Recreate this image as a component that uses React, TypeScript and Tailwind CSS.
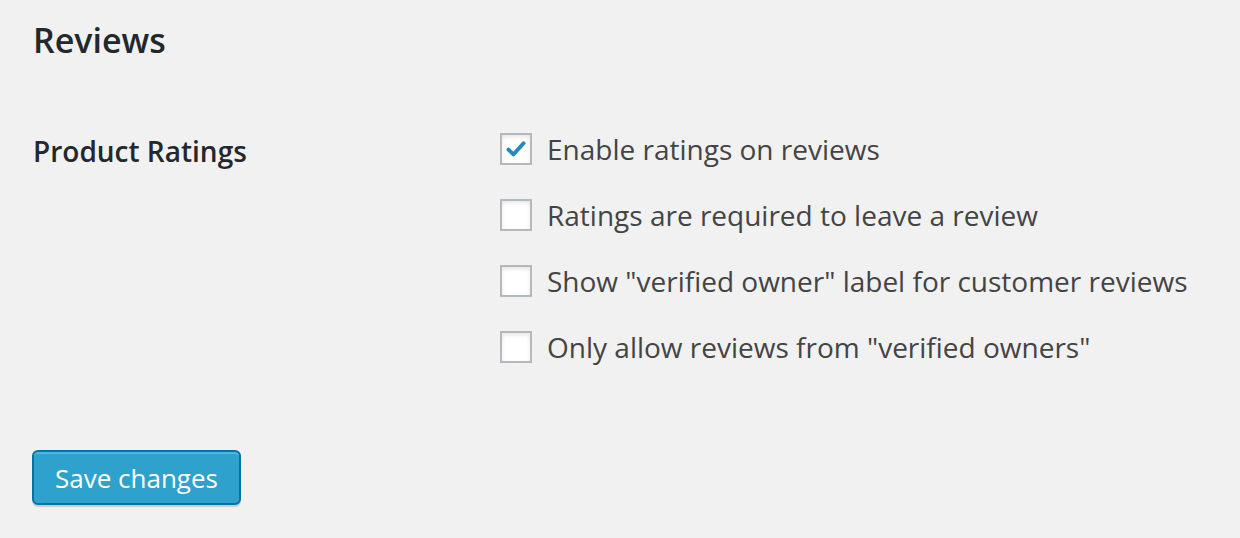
import React, { useState } from 'react';

const options = [
  { id: 'enable_ratings', label: 'Enable ratings on reviews', checked: true },
  { id: 'ratings_required', label: 'Ratings are required to leave a review', checked: false },
  { id: 'verified_label', label: 'Show "verified owner" label for customer reviews', checked: false },
  { id: 'verified_only', label: 'Only allow reviews from "verified owners"', checked: false },
];

const Checkbox = ({ checked, onChange }: { checked: boolean; onChange: () => void }) => (
  <button
    type="button"
    onClick={onChange}
    className="w-[32px] h-[32px] shrink-0 bg-white border-2 border-[#b4b9be] shadow-[inset_0_2px_4px_rgba(0,0,0,0.1)] flex items-center justify-center"
  >
    {checked && (
      <svg viewBox="0 0 20 20" className="w-[26px] h-[26px]">
        <path
          d="M4.2 10.4 L8 14.2 L15.8 5.6"
          fill="none"
          stroke="#1e8cbe"
          strokeWidth="3"
          strokeLinecap="round"
          strokeLinejoin="round"
        />
      </svg>
    )}
  </button>
);

const App = () => {
  const [values, setValues] = useState(options.map(o => o.checked));

  const toggle = (i: number) => {
    setValues(v => v.map((c, j) => (j === i ? !c : c)));
  };

  return (
    <div className="min-h-screen bg-[#f1f1f1] pl-[33px] pt-[20px] font-['Open_Sans',sans-serif] text-[#444]">
      <h2 className="text-[34px] leading-[40px] font-semibold text-[#23282d]">Reviews</h2>

      <div className="flex mt-[56px]">
        <div className="w-[467px] shrink-0 pt-[15px]">
          <span className="text-[28px] leading-[40px] font-semibold text-[#23282d]">Product Ratings</span>
        </div>
        <div className="flex flex-col">
          {options.map((o, i) => (
            <label key={o.id} className="h-[66px] flex items-center gap-[15px] cursor-pointer">
              <Checkbox checked={values[i]} onChange={() => toggle(i)} />
              <span className="text-[28px] leading-[40px]">{o.label}</span>
            </label>
          ))}
        </div>
      </div>

      <button
        type="button"
        className="mt-[70px] -ml-px h-[55px] px-[21px] rounded-[6px] bg-[#2ea2cc] border-2 border-[#0074a2] text-white text-[26px] leading-[48px] shadow-[inset_0_2px_0_rgba(120,200,230,0.5),0_2px_0_rgba(0,0,0,0.15)]"
      >
        Save changes
      </button>
    </div>
  );
};

export default App;
